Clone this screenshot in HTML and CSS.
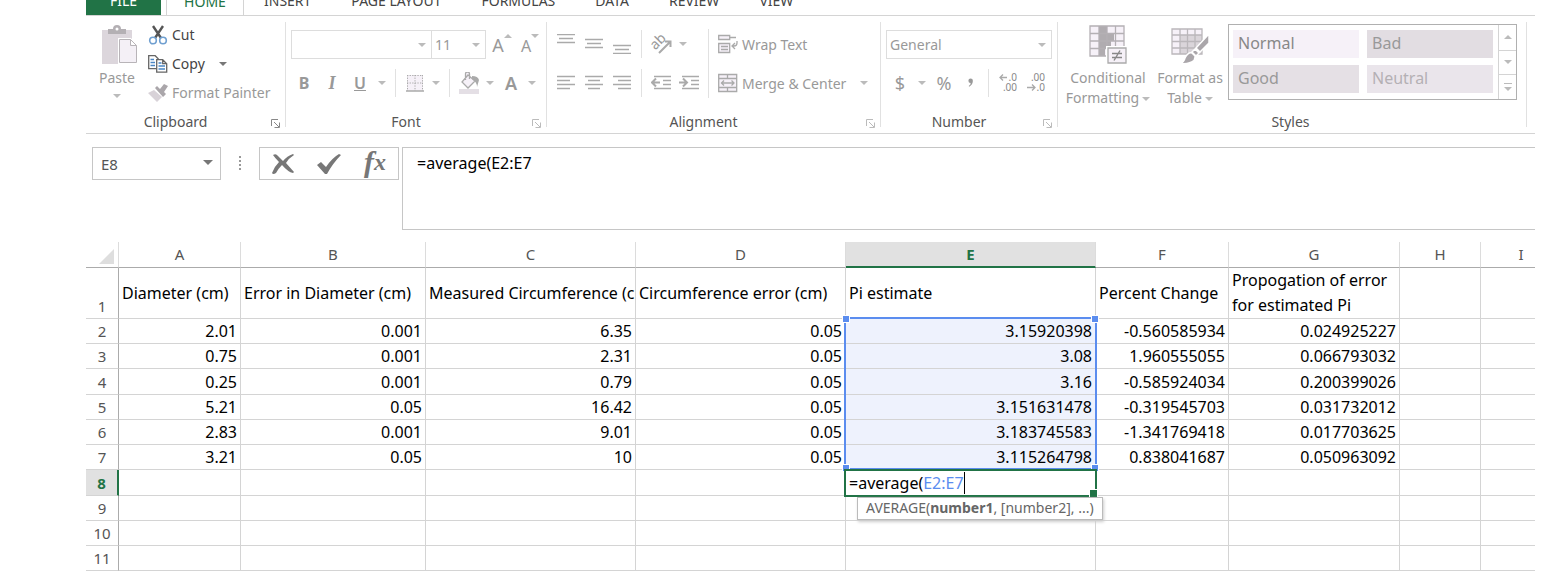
FILE: index.html
```html
<!DOCTYPE html>
<html lang="en">
<head>
<title>Pi estimate</title>
<meta http-equiv="content-type" content="text/html; charset=utf-8">
<meta name="viewport" content="width=device-width">
<link rel="stylesheet" href="styles.css">
</head>

<body>
<div class="workbook">

<nav class="tabs">
	<a class="tab file" href="#file">FILE</a>
	<a class="tab active" href="#home">HOME</a>
	<a class="tab" href="#insert">INSERT</a>
	<a class="tab" href="#layout">PAGE LAYOUT</a>
	<a class="tab" href="#formulas">FORMULAS</a>
	<a class="tab" href="#data">DATA</a>
	<a class="tab" href="#review">REVIEW</a>
	<a class="tab" href="#view">VIEW</a>
</nav>

<div class="ribbon">

	<section class="group clipboard">
		<div class="tools">
			<button type="button" class="big paste">
				<svg width="36" height="40" viewBox="0 0 36 40"><path fill="#dcd6dc" d="M1 5h30v34H1z"/><path fill="#b4b0b4" d="M7 9V4h5a4 4 0 0 1 8 0h5v5z"/><circle cx="16" cy="4" r="1.500" fill="#fff"/><path fill="#f4f0f6" stroke="#fff" stroke-width="4" d="M19 15h10l6 6v16H19z"/><path fill="#f4f0f6" stroke="#b8b4b8" d="M18.500 14.500h11l6 6v17h-17zM29.500 14.500v6h6"/></svg>
				<span>Paste</span>
				<i class="arrow"></i>
			</button>
			<div class="clip-list">
				<button type="button" class="tool on"><svg width="20" height="20" viewBox="0 0 20 20"><path fill="none" stroke="#555" stroke-width="2.400" d="M5 1l8 12M15 1L7 13"/><g fill="none" stroke="#6f9fd0" stroke-width="1.600"><circle cx="5" cy="15.500" r="3.300"/><circle cx="15" cy="15.500" r="3.300"/></g></svg>Cut</button>
				<button type="button" class="tool on"><svg width="20" height="20" viewBox="0 0 20 20"><g fill="#fff" stroke="#666" stroke-width="1.300"><path d="M.7 1.700h6.500l3 3v10H.7z"/><path d="M8.700 5.700h6l4 4v8.500h-10zM14.700 5.700v4h4"/></g><path stroke="#4a86c5" stroke-width="1.300" d="M2.500 5.500h3.500M2.500 8.500h4.500M2.500 11.500h4.500M10.500 9h3M10.500 12h6.500M10.500 15h6.500"/></svg>Copy<i class="arrow"></i></button>
				<button type="button" class="tool"><svg width="20" height="20" viewBox="0 0 20 20"><path fill="#d8d2d8" d="M0 10l6-3 8 7-5 5z"/><path fill="#aaa6aa" d="M7 5l2-2 3 3 4-5 4 2-4 6 2 2-3 3z"/></svg>Format Painter</button>
			</div>
		</div>
		<h2>Clipboard</h2>
		<button type="button" class="launcher dark" aria-label="Clipboard settings"><svg width="9" height="9" viewBox="0 0 9 9"><path d="M.5 7V.5H7M3 3l5 5M8.500 3.500v5h-5"/></svg></button>
	</section>

	<section class="group font">
		<div class="tools rows">
			<div class="row">
				<span class="combo font-name"><select aria-label="Font"><option></option></select></span>
				<span class="combo font-size"><select aria-label="Font size"><option>11</option></select></span>
				<button type="button" class="tool letter grow">A<i class="arrow up"></i></button>
				<button type="button" class="tool letter shrink">A<i class="arrow"></i></button>
			</div>
			<div class="row">
				<button type="button" class="tool letter bold">B</button>
				<button type="button" class="tool letter italic">I</button>
				<button type="button" class="tool letter underline"><u>U</u></button>
				<button type="button" class="tool drop" aria-label="Underline style"><i class="arrow"></i></button>
				<i class="sep"></i>
				<button type="button" class="tool icon" aria-label="Borders"><svg width="20" height="20" viewBox="0 0 20 20"><path fill="#f6f1f8" d="M2 2h16v16H2z"/><path fill="none" stroke="#aaa" stroke-dasharray="1.300 1.300" d="M2 2.500h16M2.500 2v16M17.500 2v16M10 2v16M2 10h16"/><path stroke="#aaa" stroke-width="1.500" d="M1 18h18"/></svg></button>
				<button type="button" class="tool drop" aria-label="Border style"><i class="arrow"></i></button>
				<i class="sep"></i>
				<button type="button" class="tool icon" aria-label="Fill color"><svg width="22" height="22" viewBox="0 0 22 22"><path fill="#e4dfe5" d="M1 17h20v5H1z"/><path fill="#f6f1f8" stroke="#aaa" stroke-width="1.300" d="M10 3l7 6-7 7-6-6zM7.500 8V2q0-2 2-2t2 2v5"/><path fill="#aaa" d="M14 4q6 0 7 4l-2 7q0-5-5-8z"/></svg></button>
				<button type="button" class="tool drop" aria-label="Fill colors"><i class="arrow"></i></button>
				<button type="button" class="tool letter color">A</button>
				<button type="button" class="tool drop" aria-label="Font colors"><i class="arrow"></i></button>
			</div>
		</div>
		<h2>Font</h2>
		<button type="button" class="launcher" aria-label="Font settings"><svg width="9" height="9" viewBox="0 0 9 9"><path d="M.5 7V.5H7M3 3l5 5M8.500 3.500v5h-5"/></svg></button>
	</section>

	<section class="group alignment">
		<div class="tools">
			<div class="rows align-left">
				<div class="row">
					<button type="button" class="tool icon" aria-label="Top align"><svg width="18" height="20" viewBox="0 0 18 20"><path class="line" d="M0 .5h18M2 4.500h14M0 8.500h18"/></svg></button>
					<button type="button" class="tool icon" aria-label="Middle align"><svg width="18" height="20" viewBox="0 0 18 20"><path class="line" d="M0 5.500h18M2 9.500h14M0 13.500h18"/></svg></button>
					<button type="button" class="tool icon" aria-label="Bottom align"><svg width="18" height="20" viewBox="0 0 18 20"><path class="line" d="M0 11.500h18M2 15.500h14M0 19.500h18"/></svg></button>
					<i class="sep"></i>
					<button type="button" class="tool icon" aria-label="Orientation"><svg width="22" height="22" viewBox="0 0 22 22"><text x="0" y="13" transform="rotate(-45 8 9)" class="ab">ab</text><path class="line thick" d="M9 20L20 9M15 8.500h5.500V14"/></svg></button>
					<button type="button" class="tool drop" aria-label="Orientations"><i class="arrow"></i></button>
				</div>
				<div class="row">
					<button type="button" class="tool icon" aria-label="Align left"><svg width="18" height="20" viewBox="0 0 18 20"><path class="line" d="M0 3.500h18M0 7.500h13M0 11.500h18M0 15.500h13"/></svg></button>
					<button type="button" class="tool icon" aria-label="Center"><svg width="18" height="20" viewBox="0 0 18 20"><path class="line" d="M0 3.500h18M3 7.500h12M0 11.500h18M3 15.500h12"/></svg></button>
					<button type="button" class="tool icon" aria-label="Align right"><svg width="18" height="20" viewBox="0 0 18 20"><path class="line" d="M0 3.500h18M5 7.500h13M0 11.500h18M5 15.500h13"/></svg></button>
					<i class="sep"></i>
					<button type="button" class="tool icon" aria-label="Decrease indent"><svg width="20" height="20" viewBox="0 0 20 20"><path class="line" d="M3 3.500h17M12 7.500h8M12 11.500h8M3 15.500h17"/><path class="line thick" d="M9 9.500H1M5 5.500l-4 4 4 4"/></svg></button>
					<button type="button" class="tool icon" aria-label="Increase indent"><svg width="20" height="20" viewBox="0 0 20 20"><path class="line" d="M3 3.500h17M12 7.500h8M12 11.500h8M3 15.500h17"/><path class="line thick" d="M0 9.500h8M4 5.500l4 4-4 4"/></svg></button>
				</div>
			</div>
			<div class="rows align-right">
				<button type="button" class="tool"><svg width="20" height="20" viewBox="0 0 20 20"><path class="line" fill="#f6f1f8" d="M.7 1.500h11v4H.7zM12 3.500h6M.7 9.500h11v9H.7zM3 12.500h7M3 15.500h7"/><path class="line" d="M19 7v2q0 3-3 3h-2M17 9l-3 3 3 3"/></svg>Wrap Text</button>
				<button type="button" class="tool merge"><svg width="20" height="20" viewBox="0 0 20 20"><path class="line" fill="#f6f1f8" d="M.7 1.500h18v17H.7zM.7 5.500h18M.7 14.500h18M9.500 1.500v4M9.500 14.500v4"/><path class="line" d="M3 10h13M6 7.500L3.500 10 6 12.500M13.500 7.500L16 10l-2.500 2.500"/></svg>Merge &amp; Center<i class="arrow"></i></button>
			</div>
		</div>
		<h2>Alignment</h2>
		<button type="button" class="launcher" aria-label="Alignment settings"><svg width="9" height="9" viewBox="0 0 9 9"><path d="M.5 7V.5H7M3 3l5 5M8.500 3.500v5h-5"/></svg></button>
	</section>

	<section class="group number">
		<div class="tools rows">
			<div class="row">
				<span class="combo num-format"><select aria-label="Number format"><option>General</option></select></span>
			</div>
			<div class="row">
				<button type="button" class="tool sign">$</button>
				<button type="button" class="tool drop" aria-label="Currencies"><i class="arrow"></i></button>
				<button type="button" class="tool sign percent">%</button>
				<button type="button" class="tool sign comma" aria-label="Comma style"><svg width="6" height="10" viewBox="0 0 8 12"><path fill="#999" d="M3.500 0a3 3 0 0 1 3 3q0 5-5 8l-.5-1q3-2 2.500-4a3 3 0 1 1 0-6z"/></svg></button>
				<i class="sep"></i>
				<button type="button" class="tool icon" aria-label="Increase decimal"><svg width="20" height="20" viewBox="0 0 20 20"><path class="line" d="M9 4.500H2M5 1.500l-3 3 3 3"/><text x="19" y="8" class="dec">.0</text><text x="19" y="18" class="dec">.00</text></svg></button>
				<button type="button" class="tool icon" aria-label="Decrease decimal"><svg width="20" height="20" viewBox="0 0 20 20"><path class="line" d="M1 14.500h8M6 11.500l3 3-3 3"/><text x="19" y="8" class="dec">.00</text><text x="19" y="18" class="dec">.0</text></svg></button>
			</div>
		</div>
		<h2>Number</h2>
		<button type="button" class="launcher" aria-label="Number settings"><svg width="9" height="9" viewBox="0 0 9 9"><path d="M.5 7V.5H7M3 3l5 5M8.500 3.500v5h-5"/></svg></button>
	</section>

	<section class="group styles">
		<div class="tools">
			<button type="button" class="big cond">
				<svg width="38" height="40" viewBox="0 0 38 40"><path fill="#f6f1f8" d="M1 1h34v30H1z"/><path fill="#b0acb0" d="M10 1h8v8h-8zM10 9h15v7H10zM10 16h12v8H10zM10 24h6v7h-6z"/><path fill="none" stroke="#b4b0b4" stroke-width="1.300" d="M1 1h34v30H1zM1 8.500h34M1 16h34M1 23.500h34M10 1v30M18 1v30M26.500 1v30"/><path fill="#f6f1f8" stroke="#fff" stroke-width="4" d="M19 23h18v14H19z"/><path fill="#f6f1f8" stroke="#aaa" stroke-width="1.300" d="M19 23h18v15H19z"/><path stroke="#888" stroke-width="1.400" d="M23 28.500h10M23 32.500h10M31 25.500l-6 10"/></svg>
				<span>Conditional</span>
				<span>Formatting<i class="arrow"></i></span>
			</button>
			<button type="button" class="big as-table">
				<svg width="38" height="40" viewBox="0 0 38 40"><path fill="#f6f1f8" d="M1 4h30v25H1z"/><path fill="#dad5da" d="M9 10h22v19H9z"/><path fill="none" stroke="#bbb7bb" stroke-width="1.300" d="M1 4h30v25H1zM1 10h30M1 16.500h30M1 23h30M9 4v25M16.500 4v25M24 4v25"/><path fill="#aaa6aa" stroke="#fff" stroke-width="1.500" d="M38 9v9l-9 9-4-4zM24 24l4 4-3 3-4-4zM21 28l3 3q1 8-15 8 4-2 5-6 3-6 7-5z"/></svg>
				<span>Format as</span>
				<span>Table<i class="arrow"></i></span>
			</button>
			<div class="gallery">
				<div class="swatches">
					<button type="button" class="swatch normal">Normal</button>
					<button type="button" class="swatch bad">Bad</button>
					<button type="button" class="swatch good">Good</button>
					<button type="button" class="swatch neutral">Neutral</button>
				</div>
				<div class="scroller">
					<button type="button" aria-label="Previous row"><i class="arrow up"></i></button>
					<button type="button" aria-label="Next row"><i class="arrow"></i></button>
					<button type="button" class="more" aria-label="More styles"><i class="arrow"></i></button>
				</div>
			</div>
		</div>
		<h2>Styles</h2>
	</section>

</div>

<div class="formula-bar">
	<span class="combo name-box"><select aria-label="Name box"><option>E8</option></select></span>
	<svg class="grip" width="4" height="16" viewBox="0 0 4 16"><path fill="#999" d="M1 1h2v2H1zM1 5h2v2H1zM1 9h2v2H1zM1 13h2v2H1z"/></svg>
	<div class="entry">
		<button type="button" aria-label="Cancel"><svg width="24" height="22" viewBox="0 0 24 22"><path fill="#777" d="M2 2q3-2 5 1l5 5q4-5 10-7l1 1q-5 3-8 8l8 9-1 1q-5-1-11-8-4 4-6 8-3 2-4 0 2-6 7-11-4-4-6-7z"/></svg></button>
		<button type="button" aria-label="Enter"><svg width="24" height="22" viewBox="0 0 24 22"><path fill="#777" d="M0 12l4-3 5 5Q15 5 22 1l2 1Q16 10 10 21H8z"/></svg></button>
		<button type="button" class="fx" aria-label="Insert function"><span class="f">f</span>x</button>
	</div>
	<textarea class="formula" aria-label="Formula" spellcheck="false">=average(E2:E7</textarea>
</div>

<div class="sheet">
<table>
<colgroup><col class="c-num"><col class="c-a"><col class="c-b"><col class="c-c"><col class="c-d"><col class="c-e"><col class="c-f"><col class="c-g"><col class="c-h"><col class="c-h"></colgroup>
<thead>
<tr><th class="corner"><svg width="16" height="15" viewBox="0 0 16 15"><path fill="#dedede" d="M15 0v15H0z"/></svg></th><th>A</th><th>B</th><th>C</th><th>D</th><th class="current">E</th><th>F</th><th>G</th><th>H</th><th>I</th></tr>
</thead>
<tbody>
<tr class="titles"><th>1</th><td>Diameter (cm)</td><td>Error in Diameter (cm)</td><td>Measured Circumference (cm)</td><td>Circumference error (cm)</td><td>Pi estimate</td><td>Percent Change</td><td class="wrap">Propogation of error for estimated Pi</td><td></td><td></td></tr>
<tr><th>2</th><td>2.01</td><td>0.001</td><td>6.35</td><td>0.05</td><td class="picked first">3.15920398<div class="range"><i></i><i></i><i></i><i></i></div></td><td>-0.560585934</td><td>0.024925227</td><td></td><td></td></tr>
<tr><th>3</th><td>0.75</td><td>0.001</td><td>2.31</td><td>0.05</td><td class="picked">3.08</td><td>1.960555055</td><td>0.066793032</td><td></td><td></td></tr>
<tr><th>4</th><td>0.25</td><td>0.001</td><td>0.79</td><td>0.05</td><td class="picked">3.16</td><td>-0.585924034</td><td>0.200399026</td><td></td><td></td></tr>
<tr><th>5</th><td>5.21</td><td>0.05</td><td>16.42</td><td>0.05</td><td class="picked">3.151631478</td><td>-0.319545703</td><td>0.031732012</td><td></td><td></td></tr>
<tr><th>6</th><td>2.83</td><td>0.001</td><td>9.01</td><td>0.05</td><td class="picked">3.183745583</td><td>-1.341769418</td><td>0.017703625</td><td></td><td></td></tr>
<tr><th>7</th><td>3.21</td><td>0.05</td><td>10</td><td>0.05</td><td class="picked">3.115264798</td><td>0.838041687</td><td>0.050963092</td><td></td><td></td></tr>
<tr><th class="current">8</th><td></td><td></td><td></td><td></td><td class="editing">=average(<span class="ref">E2:E7</span><div class="frame"></div><div class="tip">AVERAGE(<b>number1</b>, [number2], ...)</div></td><td></td><td></td><td></td><td></td></tr>
<tr><th>9</th><td></td><td></td><td></td><td></td><td></td><td></td><td></td><td></td><td></td></tr>
<tr><th>10</th><td></td><td></td><td></td><td></td><td></td><td></td><td></td><td></td><td></td></tr>
<tr><th>11</th><td></td><td></td><td></td><td></td><td></td><td></td><td></td><td></td><td></td></tr>
</tbody>
</table>
</div>

</div>
</body>
</html>
```

FILE: styles.css
```css
* {
	box-sizing: border-box;
}

body {
	margin: 0;
	padding: 0 25px 0 86px;
	color: #555;
	font-family: "Noto Sans", sans-serif;
	font-size: 14px;
	background: white;
}

button, select, textarea {
	margin: 0;
	padding: 0;
	border: 0;
	color: inherit;
	font: inherit;
	background: none;
}

svg {
	flex: none;
}

/* tabs, scrolled half out at the top */
.tabs {
	display: flex;
	align-items: flex-end;
	height: 16px;
	overflow: hidden;
	border-bottom: 1px solid #d4d4d4;
}

.tab {
	flex: none;
	padding: 0 20px;
	height: 30px;
	line-height: 32px;
	color: #444;
	text-decoration: none;
}

.tab.file {
	width: 75px;
	margin-right: 5px;
	padding: 0;
	text-align: center;
	color: white;
	background: #217346;
}

.tab.active {
	width: 78px;
	padding: 0;
	text-align: center;
	color: #217346;
	border: 1px solid #d4d4d4;
	border-bottom: 0;
}

/* ribbon */
.ribbon {
	display: flex;
	padding: 6px 0 1px;
	overflow: hidden;
	border-bottom: 1px solid #d4d4d4;
}

.group {
	position: relative;
	flex: none;
	background: linear-gradient(#e1e1e1, #e1e1e1) right top / 1px 105px no-repeat;
}

.group h2 {
	margin: 0;
	padding-right: 21px;
	line-height: 20px;
	font-size: 14px;
	font-weight: normal;
	text-align: center;
}

.clipboard { width: 200px; }
.font { width: 261px; }
.alignment { width: 334px; }
.number { width: 177px; }
.styles { width: 469px; }

.group.styles h2 {
	padding-right: 4px;
}

.launcher {
	position: absolute;
	right: 6px;
	bottom: 4px;
	width: 9px;
	height: 9px;
}

.launcher svg {
	display: block;
	fill: none;
	stroke: #bbb;
}

.launcher.dark svg {
	stroke: #888;
}

.tools {
	display: flex;
	height: 90px;
	color: #999;
}

.rows {
	display: flex;
	flex-direction: column;
	gap: 11px;
	padding-top: 8px;
}

.row {
	display: flex;
	align-items: center;
	height: 28px;
}

.tool {
	display: flex;
	align-items: center;
	gap: 4px;
	height: 28px;
	white-space: nowrap;
}

.tool.on {
	color: #444;
}

.tool.icon {
	justify-content: center;
	width: 28px;
}

.tool.drop {
	justify-content: center;
	width: 16px;
}

.arrow {
	display: inline-block;
	flex: none;
	border: 4px solid transparent;
	border-top-color: #bbb;
	border-bottom: 0;
}

.arrow.up {
	border-top: 0;
	border-bottom: 4px solid #bbb;
}

.on .arrow {
	margin-left: 10px;
	border-top-color: #777;
}

.sep {
	width: 1px;
	height: 28px;
	margin: 0 5px;
	background: #e1e1e1;
}

.line {
	fill: none;
	stroke: #aaa;
	stroke-width: 1.3;
}

.line[fill] {
	fill: #f6f1f8;
}

.line.thick {
	stroke-width: 2;
}

.ab {
	font-size: 14px;
	fill: #999;
}

.dec {
	font-size: 10px;
	text-anchor: end;
	fill: #888;
}

.big {
	display: flex;
	flex-direction: column;
	align-items: center;
	line-height: 20px;
}

.big svg {
	margin: 3px 0;
}

.big span .arrow {
	margin-left: 3px;
	vertical-align: middle;
}

.paste {
	width: 62px;
}

.paste svg {
	margin-left: 4px;
}

.paste .arrow {
	margin-top: 6px;
}

.clip-list {
	display: grid;
	align-content: start;
	align-items: start;
	grid-auto-rows: 29px;
}

.clip-list .tool {
	height: 25px;
}

/* drop-down boxes */
.combo {
	position: relative;
	flex: none;
	height: 29px;
	border: 1px solid #ddd;
}

.combo::after {
	content: "";
	position: absolute;
	top: 12px;
	right: 5px;
	border: 4px solid transparent;
	border-top-color: #bbb;
	border-bottom: 0;
}

.combo select {
	display: block;
	width: 100%;
	height: 100%;
	padding-left: 3px;
	appearance: none;
}

.font .row {
	padding-left: 4px;
}

.font .tool.icon {
	width: 27px;
}

.font-name {
	width: 141px;
	margin-left: 1px;
}

.font-size {
	width: 54px;
	border-left: 0;
}

.letter {
	justify-content: center;
	width: 28px;
	font-size: 16px;
	font-weight: 600;
}

.letter.color {
	width: 26px;
	font-size: 18px;
}

.grow, .shrink {
	align-items: flex-start;
	gap: 0;
	padding-top: 3px;
	font-weight: normal;
}

.grow {
	margin-left: 2px;
	font-size: 18px;
	line-height: 24px;
}

.shrink {
	line-height: 26px;
}

.grow .arrow, .shrink .arrow {
	margin-top: 1px;
}

.bold {
	font-weight: bold;
}

.italic {
	font-family: "Liberation Serif", serif;
	font-style: italic;
	font-size: 18px;
}

/* alignment */
.align-left {
	width: 162px;
	padding-left: 5px;
	background: linear-gradient(#e1e1e1, #e1e1e1) right 7px / 1px 69px no-repeat;
}

.align-right {
	padding-left: 9px;
}

.merge .arrow {
	margin-left: 10px;
}

/* number */
.number .row {
	padding-left: 5px;
}

.num-format {
	width: 166px;
}

.sign {
	justify-content: center;
	width: 28px;
	font-size: 18px;
}

.sign.comma {
	width: 25px;
}

/* styles */
.cond {
	width: 100px;
}

.as-table {
	width: 64px;
	white-space: nowrap;
}

.gallery {
	display: flex;
	width: 289px;
	height: 76px;
	margin: 2px 0 0 6px;
	border: 1px solid #b0b0b0;
}

.swatches {
	flex: 1;
	display: grid;
	grid-template-columns: 1fr 1fr;
	grid-auto-rows: 28px;
	gap: 7px 8px;
	padding: 5px 5px 5px 4px;
}

.swatch {
	padding: 0 0 2px 5px;
	text-align: left;
	font-size: 16px;
	line-height: 26px;
}

.swatch.normal { color: #888; background: #f6f1f8; }
.swatch.bad { color: #999; background: #e2dde2; }
.swatch.good { color: #999; background: #e5e0e5; }
.swatch.neutral { color: #b4b0b4; background: #eae5eb; }

.scroller {
	display: grid;
	grid-template-rows: 1fr 1fr 1fr;
	width: 18px;
	border-left: 1px solid #d4d4d4;
}

.scroller button {
	display: flex;
	flex-direction: column;
	align-items: center;
	justify-content: center;
}

.scroller button + button {
	border-top: 1px solid #d4d4d4;
}

.scroller .more::before {
	content: "";
	width: 8px;
	height: 1px;
	margin-bottom: 3px;
	background: #bbb;
}

/* formula bar */
.formula-bar {
	display: flex;
	align-items: flex-start;
	padding: 13px 0 12px 6px;
}

.name-box {
	width: 129px;
	height: 33px;
	border-color: #c6c6c6;
}

.name-box::after {
	right: 7px;
	border-width: 5px;
	border-bottom: 0;
	border-top-color: #777;
}

.name-box select {
	padding-left: 8px;
	font-size: 15px;
}

.grip {
	margin: 8px 17px;
}

.entry {
	display: flex;
	justify-content: space-around;
	width: 140px;
	height: 33px;
	margin-right: 3px;
	border: 1px solid #c6c6c6;
}

.entry button {
	display: flex;
	align-items: center;
	justify-content: center;
	width: 44px;
}

.entry .fx {
	padding-bottom: 4px;
	color: #777;
	font-family: "Liberation Serif", serif;
	font-style: italic;
	font-weight: bold;
	font-size: 24px;
	line-height: 24px;
}

.fx .f {
	font-size: 30px;
}

.formula {
	flex: 1;
	height: 83px;
	padding: 3px 14px;
	border: 1px solid #c6c6c6;
	border-right: 0;
	outline: 0;
	resize: none;
	color: black;
	font-size: 16px;
	line-height: 24px;
}

/* sheet */
.sheet {
	overflow: hidden;
}

table {
	table-layout: fixed;
	width: 1475px;
	border-collapse: separate;
	border-spacing: 0;
	color: black;
	font-size: 16px;
}

.c-num { width: 33px; }
.c-a { width: 122px; }
.c-b { width: 185px; }
.c-c { width: 210px; }
.c-d { width: 210px; }
.c-e { width: 250px; }
.c-f { width: 133px; }
.c-g { width: 171px; }
.c-h { width: 81px; }

th, td {
	height: 25px;
	padding: 0 3px;
	line-height: 24px;
	white-space: nowrap;
	border-right: 1px solid #d4d4d4;
	border-bottom: 1px solid #d4d4d4;
}

tbody tr:nth-child(4n) > * {
	height: 26px;
}

th {
	color: #555;
	font-size: 15px;
	font-weight: normal;
	text-align: center;
}

tbody th {
	padding: 0;
	border-right-color: #ababab;
}

thead th {
	height: 26px;
	padding-bottom: 2px;
	line-height: 22px;
	border-right-color: #dcdcdc;
	border-bottom-color: #ababab;
}

thead .corner {
	padding: 4px 3px 0 0;
	text-align: right;
	line-height: 0;
}

th.current {
	color: #217346;
	font-weight: bold;
	background: #e1e1e1;
}

thead .current {
	padding-bottom: 1px;
	border-bottom: 2px solid #217346;
}

tbody .current {
	border-right: 2px solid #217346;
}

td {
	text-align: right;
}

.titles th {
	vertical-align: bottom;
}

.titles td {
	height: 51px;
	padding-right: 0;
	overflow: hidden;
	text-align: left;
	line-height: 25px;
}

.titles .wrap {
	white-space: normal;
}

.picked {
	background: #eef2fd;
}

.first, .editing {
	position: relative;
}

/* E2:E7, six rows */
.range {
	position: absolute;
	top: -2px;
	left: -2px;
	right: -2px;
	height: 153px;
	border: 2px solid #5b8def;
}

.range i {
	position: absolute;
	width: 8px;
	height: 8px;
	border: 1px solid white;
	background: #5b8def;
}

.range i:nth-child(1) { top: -4px; left: -4px; }
.range i:nth-child(2) { top: -4px; right: -4px; }
.range i:nth-child(3) { bottom: -4px; left: -4px; }
.range i:nth-child(4) { bottom: -4px; right: -4px; }

.editing {
	text-align: left;
}

.ref {
	color: #5b8def;
	border-right: 1px solid black;
}

.frame {
	position: absolute;
	top: -1px;
	left: -2px;
	right: -2px;
	bottom: -2px;
	border: 2px solid #217346;
}

.frame::after {
	content: "";
	position: absolute;
	right: -3px;
	bottom: -3px;
	width: 7px;
	height: 7px;
	border: 1px solid white;
	background: #217346;
}

.tip {
	position: absolute;
	top: 27px;
	left: 11px;
	z-index: 1;
	height: 23px;
	padding: 0 8px;
	color: #666;
	font-size: 14px;
	line-height: 20px;
	background: white;
	border: 1px solid #bbb;
	box-shadow: 1px 2px 3px #ccc;
}
```
